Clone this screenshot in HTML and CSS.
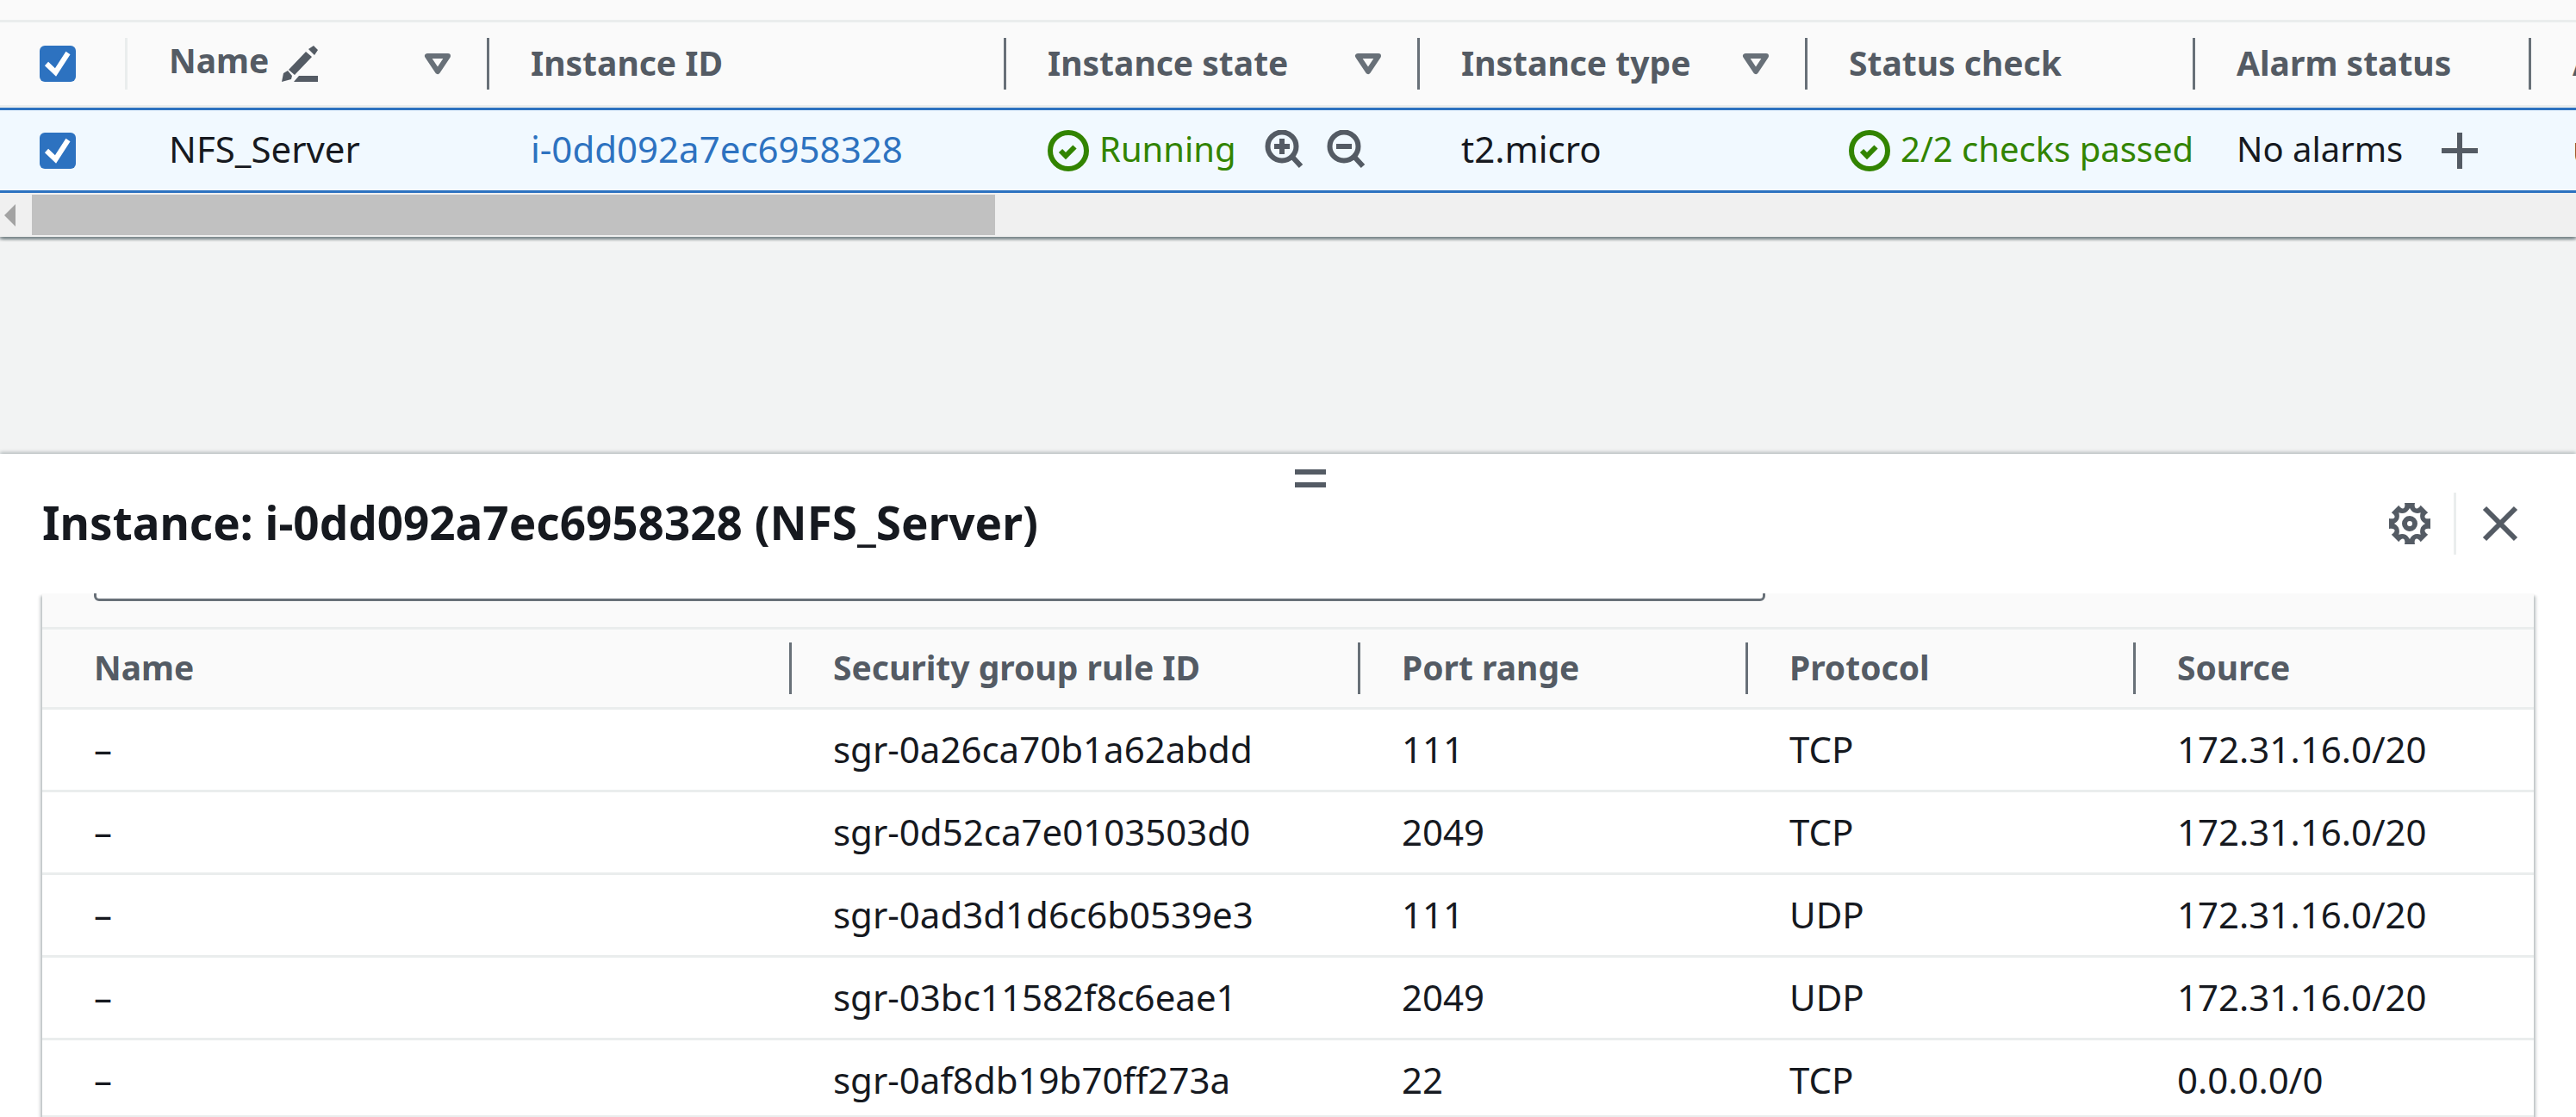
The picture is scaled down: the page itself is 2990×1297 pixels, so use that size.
FILE: index.html
```html
<!DOCTYPE html>
<html lang="en">
<head>
<meta charset="utf-8">
<title>Instances</title>
<link rel="stylesheet" href="styles.css">
</head>
<body>
<main class="instances">
  <div class="table-scroll">
    <table class="grid">
      <colgroup>
        <col class="w-select"><col class="w-name"><col class="w-id"><col class="w-state">
        <col class="w-std"><col class="w-std"><col class="w-alarm"><col class="w-std">
      </colgroup>
      <thead>
        <tr>
          <th class="select"><div class="cell"><input type="checkbox" class="check" aria-label="Select all instances" checked></div></th>
          <th><div class="cell"><span class="label raised">Name</span>
            <svg class="icon edit" viewBox="0 0 48 48"><path d="M40 3l5 5-4 6-7-7zM31 10l7 6-20 21-7-6zM10 32l5 6-1 4L3 45l2-10zM23 38h22v7H17z"/></svg>
            <button class="sort" aria-label="Sort by name"><svg class="icon" viewBox="0 0 16 16"><path d="M4 5h8l-4 6z"/></svg></button></div></th>
          <th><div class="cell"><span class="label">Instance ID</span></div></th>
          <th><div class="cell"><span class="label">Instance state</span>
            <button class="sort" aria-label="Sort by state"><svg class="icon" viewBox="0 0 16 16"><path d="M4 5h8l-4 6z"/></svg></button></div></th>
          <th><div class="cell"><span class="label">Instance type</span>
            <button class="sort" aria-label="Sort by type"><svg class="icon" viewBox="0 0 16 16"><path d="M4 5h8l-4 6z"/></svg></button></div></th>
          <th><div class="cell"><span class="label">Status check</span></div></th>
          <th><div class="cell"><span class="label">Alarm status</span></div></th>
          <th><div class="cell"><span class="label">Availability Zone</span></div></th>
        </tr>
      </thead>
      <tbody>
        <tr>
          <td class="select"><div class="cell"><input type="checkbox" class="check" aria-label="Select NFS_Server" checked></div></td>
          <td><div class="cell"><span class="label">NFS_Server</span></div></td>
          <td><div class="cell"><a class="label" href="#">i-0dd092a7ec6958328</a></div></td>
          <td><div class="cell status ok">
            <svg class="icon line" viewBox="0 0 16 16"><circle cx="8" cy="8" r="7"/><path d="M5 8l2 2 3.5-3.5"/></svg>
            <span class="label">Running</span>
            <button class="tool first" aria-label="Filter in"><svg class="icon zoom" viewBox="0 0 48 48"><circle cx="23" cy="19" r="16.5"/><path d="M34 30l11 12M14 19h18M23 10v18"/></svg></button>
            <button class="tool" aria-label="Filter out"><svg class="icon zoom" viewBox="0 0 48 48"><circle cx="23" cy="19" r="16.5"/><path d="M34 30l11 12M14 19h18"/></svg></button></div></td>
          <td><div class="cell"><span class="label">t2.micro</span></div></td>
          <td><div class="cell status ok">
            <svg class="icon line" viewBox="0 0 16 16"><circle cx="8" cy="8" r="7"/><path d="M5 8l2 2 3.5-3.5"/></svg>
            <span class="label">2/2 checks passed</span></div></td>
          <td><div class="cell status"><span class="label">No alarms</span>
            <button class="tool add" aria-label="Add alarm"><svg class="icon zoom" viewBox="0 0 48 48"><path d="M3 24h42M24 3v42"/></svg></button></div></td>
          <td><div class="cell"><span class="label">us-east-1a</span></div></td>
        </tr>
      </tbody>
    </table>
  </div>
  <div class="scrollbar" aria-hidden="true">
    <svg class="arrow" viewBox="0 0 37 51"><path d="M5 26l13-13v26z"/></svg>
    <div class="thumb"></div>
    <div class="track"></div>
  </div>
</main>

<section class="panel">
  <button class="handle" aria-label="Resize panel"><span></span><span></span></button>
  <header class="panel-head">
    <h2>Instance: i-0dd092a7ec6958328 (NFS_Server)</h2>
    <button class="tool" aria-label="Preferences"><svg class="icon gear" viewBox="-24 -24 48 48"><path fill-rule="evenodd" d="M6-24C4.300-16.900 8.900-14.900 12.700-21.200L21.200-12.700C14.900-8.900 16.900-4.300 24-6L24 6C16.900 4.300 14.900 8.900 21.200 12.700L12.700 21.200C8.900 14.900 4.300 16.900 6 24L-6 24C-4.300 16.900-8.900 14.900-12.700 21.200L-21.200 12.700C-14.900 8.900-16.900 4.300-24 6L-24-6C-16.900-4.300-14.900-8.900-21.200-12.700L-12.700-21.200C-8.900-14.900-4.300-16.900-6-24ZM0-18Q4.200-10.200 12.700-12.700Q10.200-4.200 18 0Q10.200 4.200 12.700 12.700Q4.200 10.200 0 18Q-4.200 10.200-12.700 12.700Q-10.200 4.200-18 0Q-10.200-4.200-12.700-12.700Q-4.200-10.200 0-18Z"/><circle r="6"/></svg></button>
    <span class="divider"></span>
    <button class="tool" aria-label="Close panel"><svg class="icon zoom" viewBox="0 0 48 48"><path d="M6 6l36 36M42 6L6 42"/></svg></button>
  </header>
  <div class="panel-body">
    <div class="rules">
      <div class="filter"><input type="text" aria-label="Filter rules"></div>
      <table class="grid">
        <colgroup><col class="w-rule-name"><col class="w-rule-id"><col class="w-std"><col class="w-std"><col></colgroup>
        <thead>
          <tr><th>Name</th><th>Security group rule ID</th><th>Port range</th><th>Protocol</th><th>Source</th></tr>
        </thead>
        <tbody>
          <tr><td>–</td><td>sgr-0a26ca70b1a62abdd</td><td>111</td><td>TCP</td><td>172.31.16.0/20</td></tr>
          <tr><td>–</td><td>sgr-0d52ca7e0103503d0</td><td>2049</td><td>TCP</td><td>172.31.16.0/20</td></tr>
          <tr><td>–</td><td>sgr-0ad3d1d6c6b0539e3</td><td>111</td><td>UDP</td><td>172.31.16.0/20</td></tr>
          <tr><td>–</td><td>sgr-03bc11582f8c6eae1</td><td>2049</td><td>UDP</td><td>172.31.16.0/20</td></tr>
          <tr><td>–</td><td>sgr-0af8db19b70ff273a</td><td>22</td><td>TCP</td><td>0.0.0.0/0</td></tr>
        </tbody>
      </table>
    </div>
  </div>
</section>
</body>
</html>
```
FILE: styles.css
```css
:root {
  --text: #16191f;
  --muted: #545b64;
  --rule: #687078;
  --light: #eaeded;
  --blue: #2d72c0;
  --green: #328400;
  --card-shadow: 0 3px 3px 0 rgba(0, 28, 36, .3), 3px 3px 3px 0 rgba(0, 28, 36, .15), -3px 3px 3px 0 rgba(0, 28, 36, .15);
}

* { box-sizing: border-box; }

body {
  margin: 0;
  height: 100vh;
  display: flex;
  flex-direction: column;
  overflow: hidden;
  background: #f2f3f3;
  color: var(--text);
  font: 42px/66px "Noto Sans", "Open Sans", sans-serif;
}

button {
  padding: 0;
  border: 0;
  background: none;
  color: var(--muted);
  cursor: pointer;
}

a { color: var(--blue); text-decoration: none; }

.icon { display: block; flex: none; width: 48px; height: 48px; fill: none; stroke: currentColor; stroke-width: 2; }
.icon.edit { fill: currentColor; stroke: none; margin-left: 12px; }
.icon.zoom { stroke-width: 6; }
.icon.gear { fill: currentColor; stroke: none; }
.icon.gear circle { fill: none; stroke: currentColor; stroke-width: 6; }

.grid { width: 100%; table-layout: fixed; border-collapse: separate; border-spacing: 0; }
.grid th, .grid td { text-align: left; white-space: nowrap; overflow: hidden; }
.grid th { color: var(--muted); font-size: 39px; font-weight: 700; background: #fafafa; }
.grid th:not(:last-child) {
  background: linear-gradient(var(--rule), var(--rule)) right center / 3px 60px no-repeat #fafafa;
}

.w-name { width: 420px; }
.w-id { width: 600px; }
.w-state { width: 480px; }
.w-std { width: 450px; }
.w-alarm { width: 390px; }
.w-select { width: 148px; }
.w-rule-name { width: 870px; }
.w-rule-id { width: 660px; }

/* Instance list */
.instances { flex: none; padding-top: 23px; background: #fafafa; box-shadow: var(--card-shadow); }
.table-scroll { overflow: hidden; border-top: 3px solid var(--light); }
.table-scroll .grid { width: 3388px; }
.table-scroll th, .table-scroll td { padding: 0 0 0 48px; }
.table-scroll th { border-bottom: 3px solid var(--light); }
.table-scroll td { background: #f1f9ff; border: solid var(--blue); border-width: 3px 0; }
.table-scroll .select { padding-left: 46px; }
.table-scroll th.select { background-image: linear-gradient(var(--light), var(--light)); }
.cell { display: flex; align-items: center; height: 93px; }
th .cell { height: 96px; }
.label { padding-bottom: 3px; }
.label.raised { padding-bottom: 8px; }
.status { font-size: 40px; }
.ok { color: var(--green); }
.ok .label { padding-left: 12px; }
.sort { margin: 0 36px 0 auto; color: var(--rule); }
.sort .icon { stroke-linejoin: round; }
.tool.first { margin-left: 30px; }
.tool.first + .tool { margin-left: 24px; }
.tool.add { margin-left: 42px; }

.check {
  appearance: none;
  width: 42px;
  height: 42px;
  margin: 0;
  border-radius: 6px;
  background: var(--blue) url("data:image/svg+xml,%3Csvg xmlns='http://www.w3.org/2000/svg' viewBox='0 0 42 42'%3E%3Cpath d='M8 21l10.500 10L33 8.500' fill='none' stroke='white' stroke-width='6'/%3E%3C/svg%3E");
}

.scrollbar { display: flex; height: 51px; padding: 2px 0; background: #f0f0f0; }
.arrow { width: 37px; height: 51px; margin-top: -2px; fill: #a3a3a3; }
.thumb { flex: 1118; background: #c1c1c1; }
.track { flex: 1835; }

/* Detail panel */
.panel {
  flex: 1;
  min-height: 0;
  margin-top: 252px;
  padding-top: 18px;
  display: flex;
  flex-direction: column;
  background: #fff;
  box-shadow: 0 -2px 4px rgba(0, 28, 36, .25);
}
.handle { display: flex; flex-direction: column; gap: 9px; padding-left: 52px; margin: 0 auto 6px; }
.handle span { width: 36px; height: 6px; background: var(--muted); }
.panel-head { display: flex; align-items: center; height: 72px; margin: 0 64px 45px 49px; gap: 27px; }
.panel-head h2 { flex: 1; margin: 0; padding-bottom: 3px; font-size: 53px; line-height: 66px; font-weight: 700; }
.divider { width: 3px; height: 72px; background: var(--light); }
.panel-body { flex: 1; min-height: 0; overflow: hidden; padding: 0 49px; }
.rules { height: 900px; background: #f2f3f3; box-shadow: var(--card-shadow); }
.filter {
  display: flex;
  align-items: flex-end;
  height: 42px;
  padding: 0 60px 30px;
  overflow: hidden;
  background: #fafafa;
  border-bottom: 3px solid var(--light);
}
.filter input { flex: none; width: 70%; height: 96px; border: 3px solid var(--rule); border-radius: 6px; background: #fff; }
.rules th, .rules td { padding: 13px 0 14px 48px; border-bottom: 3px solid var(--light); }
.rules th { padding-top: 11px; padding-bottom: 13px; }
.rules td { background: #fff; }
.rules th:first-child, .rules td:first-child { padding-left: 60px; }
.rules tbody tr:last-child td { padding-bottom: 8px; }
```
